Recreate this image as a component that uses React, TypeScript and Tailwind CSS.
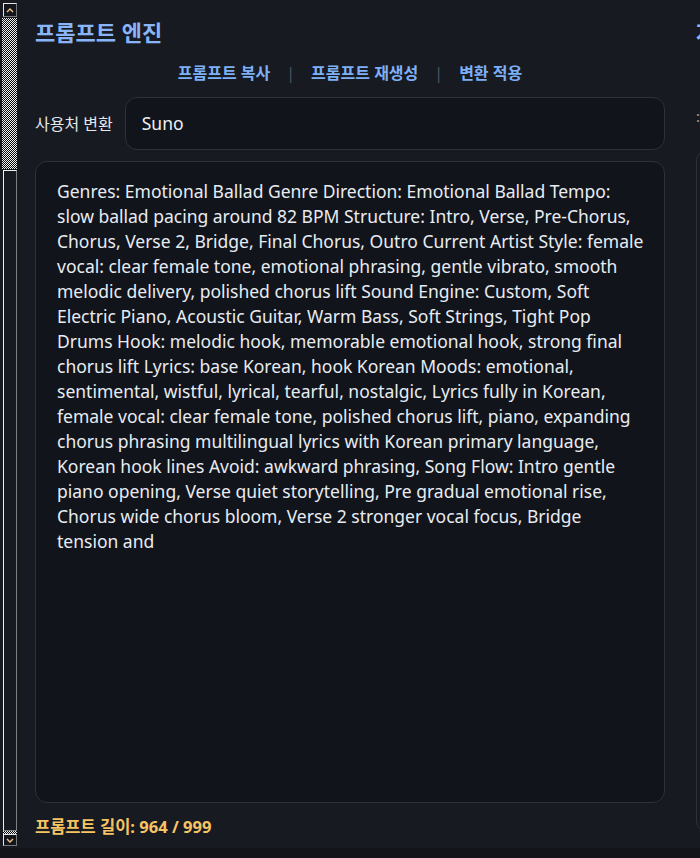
import React from "react";

const lines = [
  "Genres: Emotional Ballad Genre Direction: Emotional Ballad Tempo:",
  "slow ballad pacing around 82 BPM Structure: Intro, Verse, Pre-Chorus,",
  "Chorus, Verse 2, Bridge, Final Chorus, Outro Current Artist Style: female",
  "vocal: clear female tone, emotional phrasing, gentle vibrato, smooth",
  "melodic delivery, polished chorus lift Sound Engine: Custom, Soft",
  "Electric Piano, Acoustic Guitar, Warm Bass, Soft Strings, Tight Pop",
  "Drums Hook: melodic hook, memorable emotional hook, strong final",
  "chorus lift Lyrics: base Korean, hook Korean Moods: emotional,",
  "sentimental, wistful, lyrical, tearful, nostalgic, Lyrics fully in Korean,",
  "female vocal: clear female tone, polished chorus lift, piano, expanding",
  "chorus phrasing multilingual lyrics with Korean primary language,",
  "Korean hook lines Avoid: awkward phrasing, Song Flow: Intro gentle",
  "piano opening, Verse quiet storytelling, Pre gradual emotional rise,",
  "Chorus wide chorus bloom, Verse 2 stronger vocal focus, Bridge",
  "tension and",
];

const KR = "font-['Noto_Sans','Noto_Sans_CJK_KR',sans-serif]";

function Scrollbar() {
  return (
    <div className="ml-[3px] mt-[3px] flex w-[14px] flex-col">
      <div className="flex h-[14px] w-[14px] items-center justify-center border border-t-[#e5e5e5] border-l-[#e5e5e5] border-r-[#7a7a7a] border-b-[#7a7a7a] bg-[#14161c]">
        <svg width="8" height="6" viewBox="0 0 8 6">
          <path d="M1 5 L4 2 L7 5" fill="none" stroke="#f0c58a" strokeWidth="1.4" />
        </svg>
      </div>
      <div className="mt-[1px] h-[151px] w-[15px] -ml-[1px] bg-[repeating-conic-gradient(#0a0a0a_0_25%,#f2f2f2_0_50%)] bg-[length:2px_2px]" />
      <div className="mt-[1px] h-[661px] w-[14px] border border-t-[#f0f0f0] border-l-[#f0f0f0] border-r-[#808080] border-b-[#808080] bg-[#171a21]" />
      <div className="h-[3px] w-[14px] bg-[repeating-conic-gradient(#0a0a0a_0_25%,#f2f2f2_0_50%)] bg-[length:2px_2px]" />
      <div className="flex h-[12px] w-[14px] items-center justify-center border border-t-[#e5e5e5] border-l-[#e5e5e5] border-r-[#7a7a7a] border-b-[#7a7a7a] bg-[#14161c]">
        <svg width="8" height="5" viewBox="0 0 8 5">
          <path d="M1 1 L4 4 L7 1" fill="none" stroke="#f0c58a" strokeWidth="1.4" />
        </svg>
      </div>
    </div>
  );
}

export default function App() {
  return (
    <div className={`flex h-[858px] w-[700px] flex-col overflow-hidden bg-[#171a21] ${KR}`}>
      <div className="flex min-h-0 flex-1">
        <Scrollbar />
        <div className="flex shrink-0 gap-[31px] pl-[18px]">
          {/* Left column */}
          <div className="flex w-[630px] shrink-0 flex-col">
            <h1 className="mt-[18px] text-[22px] leading-[29px] font-bold text-[#8ab4f8]">
              프롬프트 엔진
            </h1>
            <div className="mt-[16px] flex items-center justify-center gap-[16px] text-[16px] leading-[20px] font-bold text-[#7eb0f7]">
              <span>프롬프트 복사</span>
              <span className="font-normal text-[#4b5563]">|</span>
              <span>프롬프트 재생성</span>
              <span className="font-normal text-[#4b5563]">|</span>
              <span>변환 적용</span>
            </div>
            <div className="mt-[14px] flex items-center gap-[12px]">
              <label className="text-[16px] text-[#e5e7eb]">사용처 변환</label>
              <div className="flex h-[53px] flex-1 items-center rounded-[12px] border border-[#2c313d] bg-[#11141b] px-[16px] text-[17.5px] text-[#eef0f4]">
                Suno
              </div>
            </div>
            <div className="mt-[11px] h-[642px] rounded-[12px] border border-[#2c313d] bg-[#11141b] pl-[21px] pt-[17px] text-[17.5px] leading-[25px] text-[#e8ecf2]">
              {lines.map((l, i) => (
                <div key={i} className="whitespace-nowrap">
                  {l}
                </div>
              ))}
            </div>
            <div className="mt-[14px] text-[16.5px] leading-[20px] font-bold text-[#f6c463]">
              프롬프트 길이: 964 / 999
            </div>
          </div>
          {/* Right column (clipped) */}
          <div className="flex w-[630px] shrink-0 flex-col">
            <h2 className="mt-[18px] text-[22px] leading-[29px] font-bold text-[#8ab4f8]">
              자동 작사 엔진
            </h2>
            <div className="mt-[58px] text-[15px] text-[#9ca3af]">:</div>
            <div className="mt-[21px] h-[684px] rounded-[12px] border border-[#2c313d] bg-[#171a21]" />
          </div>
        </div>
      </div>
      <div className="h-[10px] shrink-0 bg-[#12141a]" />
    </div>
  );
}
